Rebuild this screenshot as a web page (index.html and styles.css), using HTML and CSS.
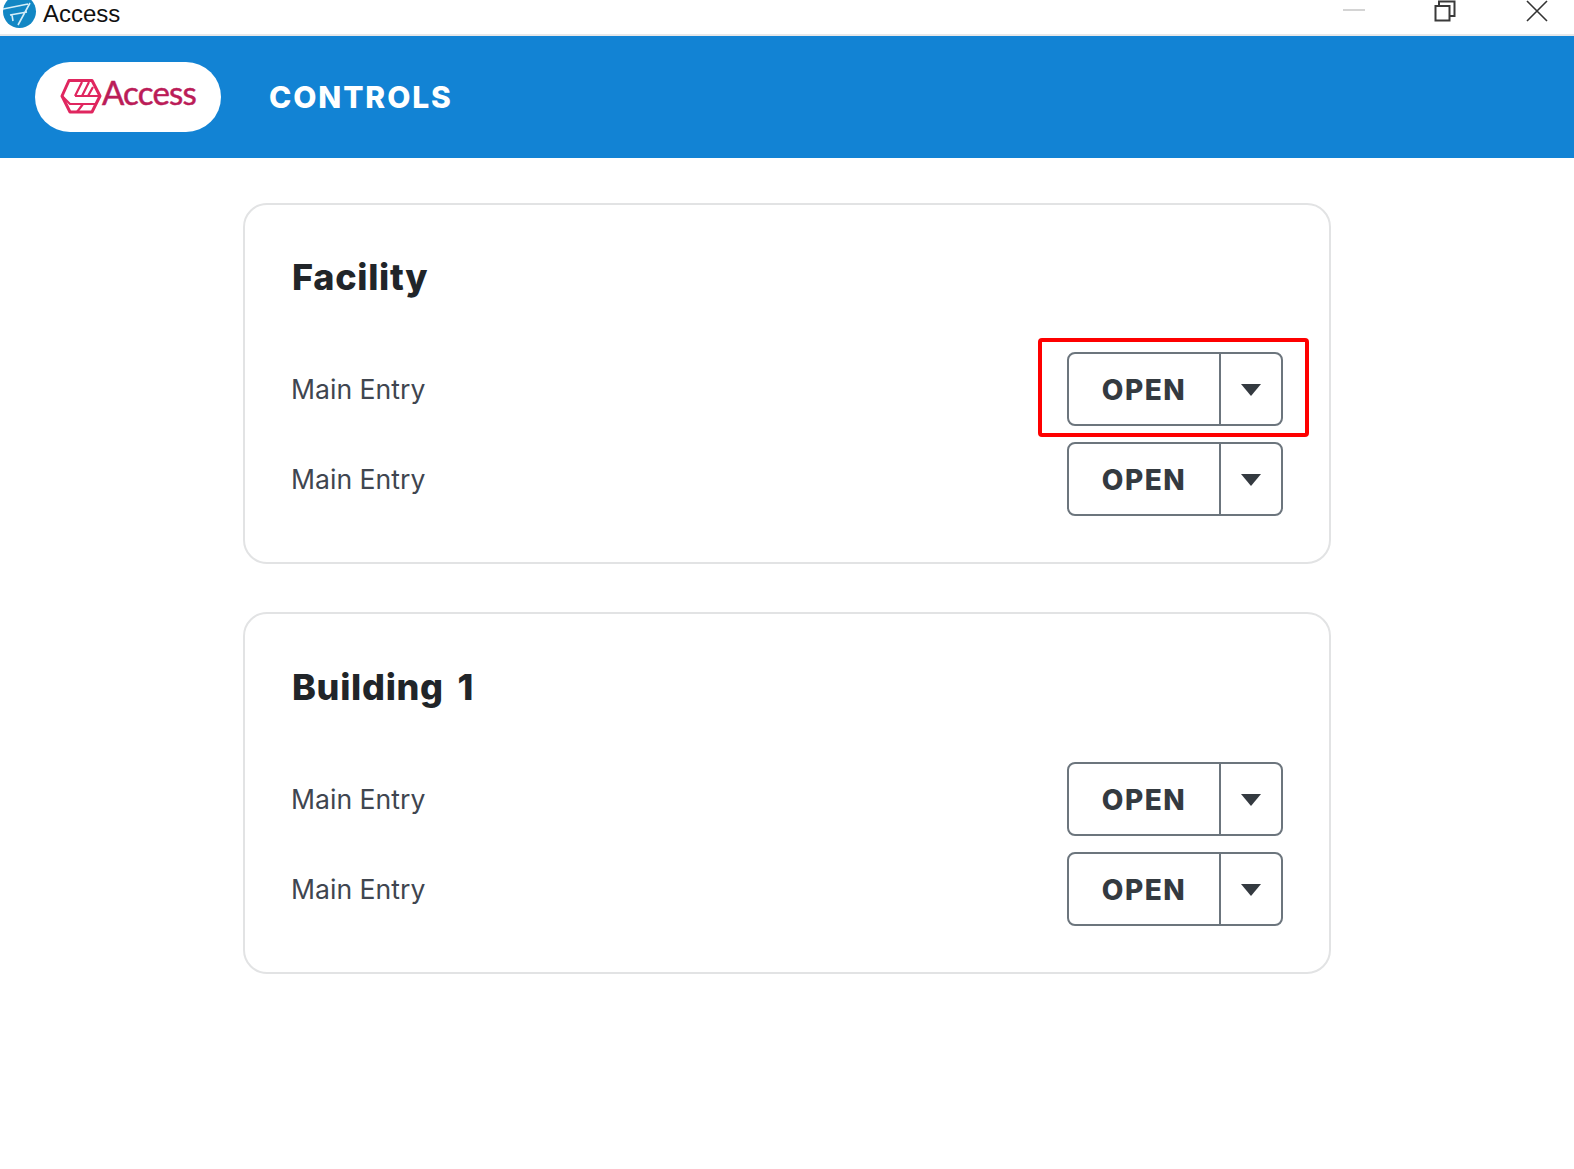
FILE: index.html
```html
<!DOCTYPE html>
<html lang="en">
<head>
<meta charset="utf-8">
<title>Access</title>
<link rel="stylesheet" href="styles.css">
</head>
<body>
<div class="titlebar">
  <div class="app-id">
    <svg class="app-icon" viewBox="3 0 34 30" width="34" height="30">
      <circle cx="19.5" cy="11.5" r="16.5" fill="#1287c4"/>
      <path d="M3 9 L28 4 M30 3 L18 25 M10 15 L27 12 M12 15 L13 21" stroke="#d5eef8" stroke-width="1.6" fill="none"/>
    </svg>
    <span class="app-name">Access</span>
  </div>
  <div class="win-controls">
    <svg class="win-min" viewBox="0 0 22 2" width="22" height="2"><rect width="22" height="2" fill="#d4d4d4"/></svg>
    <svg class="win-max" viewBox="0 0 22 22" width="22" height="22"><path d="M5 5 V1.5 H20.5 V16 H16 M1.5 6 H15.5 V20.5 H1.5 Z" fill="none" stroke="#3a3a3a" stroke-width="2"/></svg>
    <svg class="win-close" viewBox="0 0 22 22" width="22" height="22"><path d="M1 1 L21 21 M21 1 L1 21" fill="none" stroke="#333" stroke-width="1.6"/></svg>
  </div>
</div>
<header class="appbar">
  <div class="logo-pill">
    <svg class="logo-mark" viewBox="5 0 42 46" width="42" height="46">
      <g fill="none" stroke="#e0265f" stroke-linejoin="round">
        <path stroke-width="3" d="M14 8.5 H37 L45 24 L37 40 H15 L7 24 Z"/>
        <path stroke-width="2.2" d="M7 24 L15 32 H41 M20 24 H45 M20 24 L27 10 M27 24 L34 10 M33 24 L38 15 M22 40 L28 32"/>
      </g>
    </svg>
    <span class="logo-text">Access</span>
  </div>
  <span class="appbar-title">CONTROLS</span>
</header>
<main class="content">
  <section class="card">
    <h2 class="card-title">Facility</h2>
    <div class="rows">
      <div class="row"><span class="row-label">Main Entry</span>
        <div class="split"><span class="split-main">OPEN</span><span class="split-toggle"><i class="caret"></i></span></div>
      </div>
      <div class="row"><span class="row-label">Main Entry</span>
        <div class="split"><span class="split-main">OPEN</span><span class="split-toggle"><i class="caret"></i></span></div>
      </div>
    </div>
    <div class="highlight"></div>
  </section>
  <section class="card card-tall">
    <h2 class="card-title">Building 1</h2>
    <div class="rows">
      <div class="row"><span class="row-label">Main Entry</span>
        <div class="split"><span class="split-main">OPEN</span><span class="split-toggle"><i class="caret"></i></span></div>
      </div>
      <div class="row"><span class="row-label">Main Entry</span>
        <div class="split"><span class="split-main">OPEN</span><span class="split-toggle"><i class="caret"></i></span></div>
      </div>
    </div>
  </section>
</main>
</body>
</html>
```
FILE: styles.css
```css
* { box-sizing: border-box; }
html, body { margin: 0; padding: 0; background: #fff; }
body { height: 1169px; overflow: hidden; font-family: "Inter", "Liberation Sans", sans-serif; }

.titlebar {
  height: 36px;
  display: flex;
  justify-content: space-between;
  overflow: hidden;
  border-bottom: 2px solid #e6e8ea;
}
.app-id { display: flex; align-items: flex-start; gap: 6px; padding-left: 3px; }
.app-icon { display: block; }
.app-name {
  font-family: "Liberation Sans", Arial, sans-serif;
  font-size: 24px;
  line-height: 28px;
  color: #111;
}
.win-controls { display: flex; align-items: flex-start; gap: 69px; padding-right: 26px; }
.win-min { margin-top: 9px; }
.win-max { margin-top: 0; }
.win-close { margin-top: 0; margin-left: 1px; }

.appbar {
  height: 122px;
  background: #1283d4;
  display: flex;
  align-items: center;
  gap: 48px;
  padding-left: 35px;
}
.logo-pill {
  width: 186px;
  height: 70px;
  border-radius: 35px;
  background: #fff;
  display: flex;
  align-items: center;
  padding-left: 25px;
}
.logo-mark { display: block; margin-top: -4px; }
.logo-text {
  font-family: "Lato", sans-serif;
  font-size: 33px;
  letter-spacing: -0.8px;
  line-height: 40px;
  margin-top: -10px;
  color: #bb1c58;
  -webkit-text-stroke: 0.5px #bb1c58;
}
.appbar-title {
  font-family: "Inter", sans-serif;
  font-weight: 800;
  font-size: 30px;
  letter-spacing: 1.9px;
  color: #fff;
}

.content {
  width: 1088px;
  margin: 45px 0 0 243px;
  display: flex;
  flex-direction: column;
  gap: 48px;
}
.card {
  position: relative;
  height: 361px;
  border: 2px solid #e2e3e4;
  border-radius: 24px;
  padding: 47px 46px 0 47px;
}
.card-tall { height: 362px; padding-top: 48px; }
.card-title {
  margin: 0;
  font-family: "Inter", sans-serif;
  font-weight: 800;
  font-size: 36px;
  line-height: 50px;
  letter-spacing: 0.7px;
  word-spacing: 5px;
  color: #212529;
}
.rows { margin-top: 50px; display: flex; flex-direction: column; gap: 16px; }
.row { display: flex; justify-content: space-between; align-items: center; height: 74px; }
.row-label { font-size: 26.6px; color: #3f4650; margin-left: -1px; }
.split {
  width: 216px;
  height: 74px;
  border: 2px solid #6c757d;
  border-radius: 8px;
  display: flex;
  align-items: stretch;
}
.split-main {
  width: 152px;
  padding-top: 2px;
  border-right: 2px solid #6c757d;
  display: flex;
  align-items: center;
  justify-content: center;
  font-weight: 800;
  font-size: 28px;
  letter-spacing: 1.5px;
  color: #343a40;
}
.split-toggle { flex: 1; display: flex; align-items: center; justify-content: center; }
.caret {
  width: 0;
  height: 0;
  margin-top: 1px;
  border-left: 10px solid transparent;
  border-right: 10px solid transparent;
  border-top: 12px solid #343a40;
}
.highlight {
  position: absolute;
  left: 793px;
  top: 133px;
  width: 271px;
  height: 99px;
  border: 4px solid #fe0000;
  border-radius: 4px;
}
```
